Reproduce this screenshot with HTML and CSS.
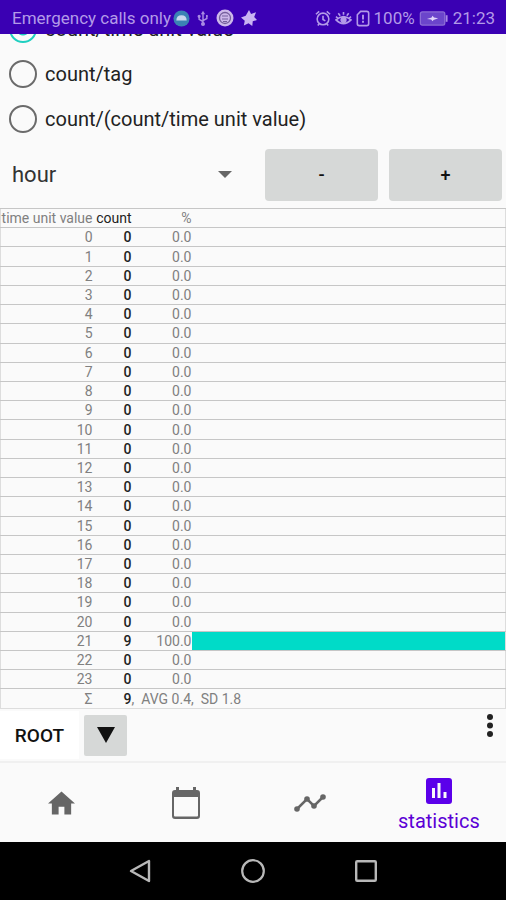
FILE: index.html
```html
<!DOCTYPE html>
<html lang="en">
<head>
<meta charset="utf-8">
<meta name="viewport" content="width=device-width, initial-scale=1">
<title>Statistics</title>
<link rel="stylesheet" href="styles.css">
</head>
<body>
<div class="screen">
  <header class="status">
    <span class="status-text">Emergency calls only</span>
    <div class="status-icons">
      <svg width="17" height="17" viewBox="0 0 18 18"><circle cx="9" cy="9" r="8.5" fill="#3b82b4"/><path d="M3.500 11c0-3.500 2-5.500 5.500-5.500s5.500 2 5.500 5.500z" fill="#c9d6ee"/></svg>
      <svg width="12" height="17" viewBox="0 0 14 18" fill="none" stroke="#a98be4" stroke-width="1.700"><path d="M7 3v12M2.500 7v3L7 12.500M11.500 6v3L7 11.500"/><path d="M7 0l2.500 4h-5z" fill="#a98be4" stroke="none"/><circle cx="7" cy="15.500" r="1.500" fill="#a98be4"/><circle cx="2.500" cy="6.500" r="1" fill="#a98be4"/><path d="M10.500 5h2v2h-2z" fill="#a98be4" stroke="none"/></svg>
      <svg width="18" height="18" viewBox="0 0 18 18"><circle cx="9" cy="9" r="8.500" fill="#cdb9ea"/><circle cx="9" cy="9" r="5.500" fill="none" stroke="#75609c" stroke-width="1.300"/><path d="M6 7h6M6 10h6M7 12.500h4" stroke="#75609c" stroke-width="1.200"/></svg>
      <svg width="16" height="16" viewBox="0 0 17 17"><path d="M8.500 0l2.200 4.200L16 2.500l-2 5 3 3-4.500 1.500L12 17l-4-3-5 2.500 1-5L0 8l5-2z" fill="#c9b4f2"/></svg>
    </div>
    <div class="status-right">
      <svg width="16" height="17" viewBox="0 0 17 18" fill="none" stroke="#b39ae8" stroke-width="1.700"><circle cx="8.500" cy="9.500" r="6.200"/><path d="M8.500 6v4l2.500 1.500M1 4.500L4.500 1.500M16 4.500L12.500 1.500M4.500 14.500L3 16.500M12.500 14.500L14 16.500"/></svg>
      <svg width="17" height="17" viewBox="0 0 18 18" fill="none" stroke="#b39ae8" stroke-width="1.700"><path d="M1 10.500Q9 3.500 17 10.500Q9 18.500 1 10.500zM9 2v3M3.500 3.500l2 2.500M14.500 3.500l-2 2.500M1 7l2 1.500M17 7l-2 1.500"/><circle cx="9" cy="10.500" r="2.500" fill="#b39ae8"/></svg>
      <svg width="14" height="17" viewBox="0 0 14 18" fill="none" stroke="#b39ae8" stroke-width="1.700"><path d="M4.500 1.500H11q2 0 2 2v11q0 2-2 2H3q-2 0-2-2V5z"/><path d="M7 5v5M7 11.500v2" stroke-width="2"/></svg>
      <span>100%</span>
      <svg class="battery" width="29" height="15" viewBox="0 0 30 16"><rect x="1" y="1" width="26" height="14" rx="2" fill="#6b45cb" stroke="#8c6cd6" stroke-width="1.400"/><path d="M28 4.500h2v7h-2z" fill="#a98be4"/><path d="M8 8.500l5-1.500 1-2 1.500 2 4.500.8-5 1.700-1 1.500-1.500-2z" fill="#e0d4fa"/></svg>
      <span>21:23</span>
    </div>
  </header>

  <main class="content">
    <form class="modes">
      <label class="mode"><input type="radio" name="mode" checked><span>count/time unit value</span></label>
      <label class="mode"><input type="radio" name="mode"><span>count/tag</span></label>
      <label class="mode"><input type="radio" name="mode"><span>count/(count/time unit value)</span></label>
    </form>

    <div class="controls">
      <div class="spinner">
        <select aria-label="Time unit"><option>hour</option></select>
        <svg width="14" height="7" viewBox="0 0 14 7"><path d="M0 0h14L7 7z" fill="#666"/></svg>
      </div>
      <button class="step" type="button">-</button>
      <button class="step" type="button">+</button>
    </div>

    <div class="table-area">
      <table class="stats">
        <colgroup><col class="c-unit"><col class="c-count"><col class="c-pct"><col></colgroup>
        <tbody>
          <tr><th>time unit value</th><th class="count">count</th><th>%</th><td></td></tr>
          <tr><td>0</td><td class="count">0</td><td>0.0</td><td></td></tr>
          <tr><td>1</td><td class="count">0</td><td>0.0</td><td></td></tr>
          <tr><td>2</td><td class="count">0</td><td>0.0</td><td></td></tr>
          <tr><td>3</td><td class="count">0</td><td>0.0</td><td></td></tr>
          <tr><td>4</td><td class="count">0</td><td>0.0</td><td></td></tr>
          <tr><td>5</td><td class="count">0</td><td>0.0</td><td></td></tr>
          <tr><td>6</td><td class="count">0</td><td>0.0</td><td></td></tr>
          <tr><td>7</td><td class="count">0</td><td>0.0</td><td></td></tr>
          <tr><td>8</td><td class="count">0</td><td>0.0</td><td></td></tr>
          <tr><td>9</td><td class="count">0</td><td>0.0</td><td></td></tr>
          <tr><td>10</td><td class="count">0</td><td>0.0</td><td></td></tr>
          <tr><td>11</td><td class="count">0</td><td>0.0</td><td></td></tr>
          <tr><td>12</td><td class="count">0</td><td>0.0</td><td></td></tr>
          <tr><td>13</td><td class="count">0</td><td>0.0</td><td></td></tr>
          <tr><td>14</td><td class="count">0</td><td>0.0</td><td></td></tr>
          <tr><td>15</td><td class="count">0</td><td>0.0</td><td></td></tr>
          <tr><td>16</td><td class="count">0</td><td>0.0</td><td></td></tr>
          <tr><td>17</td><td class="count">0</td><td>0.0</td><td></td></tr>
          <tr><td>18</td><td class="count">0</td><td>0.0</td><td></td></tr>
          <tr><td>19</td><td class="count">0</td><td>0.0</td><td></td></tr>
          <tr><td>20</td><td class="count">0</td><td>0.0</td><td></td></tr>
          <tr><td>21</td><td class="count">9</td><td>100.0</td><td class="bar" style="background-size:100% 100%"></td></tr>
          <tr><td>22</td><td class="count">0</td><td>0.0</td><td></td></tr>
          <tr><td>23</td><td class="count">0</td><td>0.0</td><td></td></tr>
          <tr><td>Σ</td><td class="count">9</td><td class="summary" colspan="2">,&nbsp; AVG 0.4,&nbsp; SD 1.8</td></tr>
        </tbody>
      </table>
    </div>
  </main>

  <div class="path">
    <button class="root" type="button">ROOT</button>
    <button class="drop" type="button" aria-label="Choose tag"><svg width="20" height="16" viewBox="0 0 20 16"><path d="M1 0h18l-9 16z" fill="#111"/></svg></button>
    <button class="more" type="button" aria-label="More"><svg width="6" height="24" viewBox="0 0 6 24" fill="#222"><circle cx="3" cy="3" r="3"/><circle cx="3" cy="11.500" r="3"/><circle cx="3" cy="20" r="3"/></svg></button>
  </div>

  <nav class="tabs">
    <a href="#home" aria-label="Home"><svg width="27" height="24" viewBox="0 0 28 24"><path d="M14 0l14 12.500h-4V24h-7v-8h-6v8H4V12.500H0z" fill="#666"/></svg></a>
    <a href="#calendar" aria-label="Calendar"><svg width="28" height="32" viewBox="0 0 28 32"><path d="M4 0h3v3h14V0h3v3h1q3 0 3 3v23q0 3-3 3H3q-3 0-3-3V6q0-3 3-3h1zM2 10v18.500q0 1 1 1h22q1 0 1-1V10z" fill="#666"/></svg></a>
    <a href="#timeline" aria-label="Timeline"><svg width="32" height="18" viewBox="0 0 32 18" fill="#666"><path d="M3 15L13 5l7 7 9-9" fill="none" stroke="#666" stroke-width="2.500"/><circle cx="3" cy="15" r="2.800"/><circle cx="13" cy="5" r="2.800"/><circle cx="20" cy="12" r="2.800"/><circle cx="29" cy="3" r="2.800"/></svg></a>
    <a class="active" href="#statistics"><svg width="26" height="26" viewBox="0 0 26 26"><rect width="26" height="26" rx="3" fill="#5b00ea"/><path d="M6 10h3v10H6zM11.500 5h3v15h-3zM17.500 14h3v6h-3z" fill="#fafafa"/></svg><span>statistics</span></a>
  </nav>

  <footer class="system">
    <button type="button" aria-label="Back"><svg width="22" height="24" viewBox="0 0 22 24"><path d="M20 2v20L2 12z" fill="none" stroke="#b8b8b8" stroke-width="2.400" stroke-linejoin="round"/></svg></button>
    <button type="button" aria-label="Home"><svg width="24" height="24" viewBox="0 0 24 24"><circle cx="12" cy="12" r="10.800" fill="none" stroke="#b8b8b8" stroke-width="2.200"/></svg></button>
    <button type="button" aria-label="Recents"><svg width="22" height="22" viewBox="0 0 22 22"><rect x="1.200" y="1.200" width="19.600" height="19.600" rx="1" fill="none" stroke="#b8b8b8" stroke-width="2.400"/></svg></button>
  </footer>
</div>
</body>
</html>
```
FILE: styles.css
```css
* { box-sizing: border-box; }
html, body { height: 100%; }
body {
  margin: 0;
  background: #fafafa;
  color: #222;
  font-family: Roboto, "Liberation Sans", sans-serif;
}
svg { display: block; flex: none; }
button {
  border: 0;
  padding: 0;
  background: none;
  font-family: inherit;
  color: #111;
}
.screen {
  display: flex;
  flex-direction: column;
  min-height: 100vh;
}

.status {
  display: flex;
  align-items: center;
  height: 34px;
  padding: 2px 11px 0 12px;
  background: #3a00b3;
  color: #b39ae8;
  font-size: 17px;
  white-space: nowrap;
}
.status-icons { display: flex; align-items: center; gap: 7px; margin-left: 2px; }
.status-right { display: flex; align-items: center; gap: 4px; margin-left: auto; }
.battery { margin-right: 1px; }

.content {
  flex: 1;
  display: flex;
  flex-direction: column;
}
.modes {
  display: flex;
  flex-direction: column;
  justify-content: flex-end;
  height: 107px;
  overflow: hidden;
}
.mode {
  flex: none;
  display: flex;
  align-items: center;
  gap: 8px;
  height: 45px;
  padding-left: 9px;
  font-size: 20px;
}
.mode input {
  appearance: none;
  flex: none;
  width: 28px;
  height: 28px;
  margin: 0;
  border: 2px solid #6b6b6b;
  border-radius: 50%;
}
.mode input:checked {
  border-color: #1fcfc0;
  background: radial-gradient(circle, #1fcfc0 6px, transparent 7px);
}

.controls {
  display: grid;
  grid-template-columns: 9fr 4fr 4fr;
  gap: 11px;
  align-items: center;
  height: 67px;
  padding-right: 4px;
}
.spinner { display: flex; align-items: center; padding-right: 22px; }
.spinner select {
  appearance: none;
  flex: 1;
  min-width: 0;
  border: 0;
  padding: 0 0 0 12px;
  background: none;
  color: #333;
  font-family: inherit;
  font-size: 22px;
}
.step {
  height: 52px;
  border-radius: 4px;
  background: #d6d8d7;
  font-size: 18px;
  font-weight: 500;
}

.table-area { flex: 1; display: grid; }
.stats {
  width: 100%;
  height: 100%;
  table-layout: fixed;
  border-collapse: collapse;
  border: 1px solid #ddd;
  color: #808080;
  font-size: 14px;
  line-height: 16px;
}
.c-unit { width: 92px; }
.c-count { width: 39px; }
.c-pct { width: 60px; }
.stats th, .stats td {
  padding: 0;
  border-top: 1px solid #c6c6c6;
  font-weight: 400;
  text-align: right;
  white-space: nowrap;
}
.stats .count { color: #222; font-weight: 500; }
.stats th.count { font-weight: 400; }
.stats .summary { text-align: left; }
.bar { background: linear-gradient(#00dbc8, #00dbc8) no-repeat; }

.path {
  display: flex;
  align-items: center;
  gap: 5px;
  height: 54px;
  padding-right: 13px;
  border-bottom: 2px solid #f0f0f0;
}
.root {
  width: 79px;
  height: 48px;
  background: #fff;
  font-size: 19px;
  font-weight: 500;
}
.drop {
  display: grid;
  place-items: center;
  width: 43px;
  height: 41px;
  border-radius: 2px;
  background: #d6d8d7;
}
.more { align-self: flex-start; margin-left: auto; padding-top: 5px; }

.tabs {
  display: grid;
  grid-template-columns: 12fr 12fr 12fr 13fr;
  height: 79px;
}
.tabs a {
  display: flex;
  flex-direction: column;
  align-items: center;
  justify-content: center;
  gap: 5px;
  color: #5b00d6;
  font-size: 20px;
  line-height: 24px;
  text-decoration: none;
}
.tabs .active { padding-top: 5px; }

.system {
  display: flex;
  align-items: center;
  justify-content: center;
  gap: 90px;
  height: 58px;
  background: #000;
}
```
